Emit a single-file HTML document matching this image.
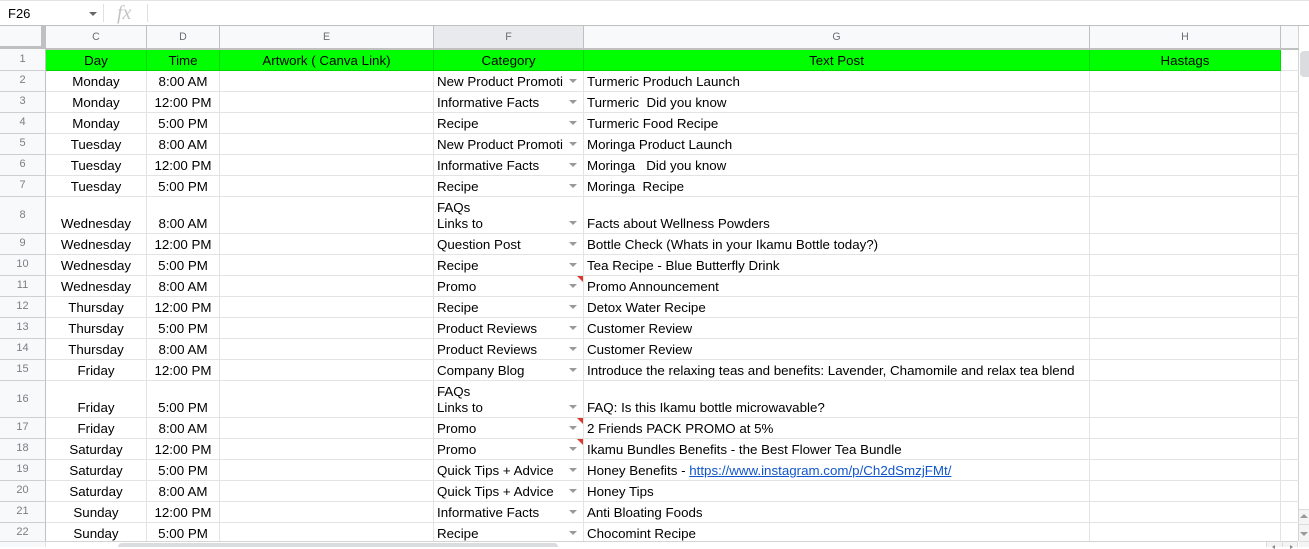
<!DOCTYPE html>
<html lang="en">
<head>
<meta charset="utf-8">
<title>Sheet</title>
<style>
*{box-sizing:border-box}
html,body{margin:0;padding:0;width:1309px;height:547px;overflow:hidden;background:#fff;font-family:"Liberation Sans",Arial,sans-serif;color:#000}
.abs{position:absolute}
#grid{position:absolute;left:0;top:49px;width:1299px;height:492px;overflow:hidden}
.r{display:flex;height:21px;border-bottom:1px solid #e2e3e3}
.r.t{height:37px}
.r>div{position:relative;flex:none;height:100%;border-right:1px solid #e2e3e3;font-size:13.33px;line-height:16px;white-space:nowrap;overflow:hidden}
.r>div:nth-child(1){width:46px;background:#f8f9fa;border-right:1px solid #c0c0c0;color:#7b7d80;font-size:11px;text-align:center}
.r>div:nth-child(2){width:101px;text-align:center}
.r>div:nth-child(3){width:73px;text-align:center}
.r>div:nth-child(4){width:214px;text-align:center}
.r>div:nth-child(5){width:150px}
.r>div:nth-child(6){width:506px}
.r>div:nth-child(7){width:191px;text-align:center}
.r>div:nth-child(8){width:18px;border-right:1px solid #d4d4d4}
.r>div>span{position:absolute;left:0;right:0;bottom:1px;padding:0 3px}
.r>div:nth-child(1)>span{bottom:3px;padding:0}
.r.h{height:22px;border-bottom:1px solid #00d800}
.r.h>div{background:#0f0;border-right-color:#00d800}
.r.h>div:nth-child(1){background:#f8f9fa;border-right-color:#c0c0c0;border-bottom:1px solid #cfcfcf;height:22px}
.r.h>div:nth-child(8){background:#fff;border-right-color:#d4d4d4;border-bottom:1px solid #e2e3e3;height:22px}
.r>div:nth-child(1){border-bottom:1px solid #cfcfcf;height:calc(100% + 1px)}
.dd::after{content:"";position:absolute;right:6px;bottom:8px;border-left:4px solid transparent;border-right:4px solid transparent;border-top:4px solid #999}
.n::before{content:"";position:absolute;right:0;top:0;border-top:6px solid #db3a2e;border-left:6px solid transparent;z-index:1}
.r>div:nth-child(5)>span{right:20px;overflow:hidden;padding-right:0;white-space:pre}
.r.h>div:nth-child(5)>span{right:0;padding:0}
a{color:#1155cc;text-decoration:underline}
.ch{position:absolute;top:26px;height:23px;background:#f8f9fa;border-right:1px solid #c0c0c0;color:#6b6e72;font-size:10.6px;line-height:23px;text-align:center}
</style>
</head>
<body>
<!-- formula bar -->
<div class="abs" style="left:0;top:0;width:1309px;height:26px;background:#fff;border-top:1px solid #e3e3e3;border-bottom:1px solid #c0c0c0"></div>
<div class="abs" style="left:8px;top:6px;font-size:13px;line-height:16px;color:#000">F26</div>
<div class="abs" style="left:89px;top:12px;border-left:4px solid transparent;border-right:4px solid transparent;border-top:4px solid #666"></div>
<div class="abs" style="left:103px;top:4px;width:1px;height:18px;background:#e0e0e0"></div>
<div class="abs" style="left:117px;top:1px;font-family:'Liberation Serif',serif;font-style:italic;font-size:20px;line-height:24px;color:#c4c4c4">fx</div>
<div class="abs" style="left:147px;top:4px;width:1px;height:18px;background:#e0e0e0"></div>

<!-- column headers -->
<div class="abs" style="left:0;top:26px;width:46px;height:23px;background:#f8f9fa;border-right:1px solid #c0c0c0"></div>
<div class="abs" style="left:41px;top:26px;width:4px;height:23px;background:#c0c0c0"></div>
<div class="abs" style="left:0;top:46px;width:45px;height:3px;background:#c0c0c0"></div>
<div class="ch" style="left:46px;width:101px">C</div>
<div class="ch" style="left:147px;width:73px">D</div>
<div class="ch" style="left:220px;width:214px">E</div>
<div class="ch" style="left:434px;width:150px;background:#e8eaed">F</div>
<div class="ch" style="left:584px;width:506px">G</div>
<div class="ch" style="left:1090px;width:191px">H</div>
<div class="ch" style="left:1281px;width:18px;border-right:1px solid #d4d4d4"></div>

<div id="grid">
<div class="r h"><div><span>1</span></div><div><span>Day</span></div><div><span>Time</span></div><div><span>Artwork ( Canva Link)</span></div><div style="text-align:center"><span>Category</span></div><div style="text-align:center"><span>Text Post</span></div><div><span>Hastags</span></div><div></div></div>
<div class="r"><div><span>2</span></div><div><span>Monday</span></div><div><span>8:00 AM</span></div><div></div><div class="dd"><span>New Product Promotion</span></div><div><span>Turmeric Produch Launch</span></div><div></div><div></div></div>
<div class="r"><div><span>3</span></div><div><span>Monday</span></div><div><span>12:00 PM</span></div><div></div><div class="dd"><span>Informative Facts</span></div><div><span>Turmeric&nbsp; Did you know</span></div><div></div><div></div></div>
<div class="r"><div><span>4</span></div><div><span>Monday</span></div><div><span>5:00 PM</span></div><div></div><div class="dd"><span>Recipe</span></div><div><span>Turmeric Food Recipe</span></div><div></div><div></div></div>
<div class="r"><div><span>5</span></div><div><span>Tuesday</span></div><div><span>8:00 AM</span></div><div></div><div class="dd"><span>New Product Promotion</span></div><div><span>Moringa Product Launch</span></div><div></div><div></div></div>
<div class="r"><div><span>6</span></div><div><span>Tuesday</span></div><div><span>12:00 PM</span></div><div></div><div class="dd"><span>Informative Facts</span></div><div><span>Moringa &nbsp; Did you know</span></div><div></div><div></div></div>
<div class="r"><div><span>7</span></div><div><span>Tuesday</span></div><div><span>5:00 PM</span></div><div></div><div class="dd"><span>Recipe</span></div><div><span>Moringa&nbsp; Recipe</span></div><div></div><div></div></div>
<div class="r t"><div><span style="bottom:10px">8</span></div><div><span>Wednesday</span></div><div><span>8:00 AM</span></div><div></div><div class="dd"><span>FAQs
Links to</span></div><div><span>Facts about Wellness Powders</span></div><div></div><div></div></div>
<div class="r"><div><span>9</span></div><div><span>Wednesday</span></div><div><span>12:00 PM</span></div><div></div><div class="dd"><span>Question Post</span></div><div><span>Bottle Check (Whats in your Ikamu Bottle today?)</span></div><div></div><div></div></div>
<div class="r"><div><span>10</span></div><div><span>Wednesday</span></div><div><span>5:00 PM</span></div><div></div><div class="dd"><span>Recipe</span></div><div><span>Tea Recipe - Blue Butterfly Drink</span></div><div></div><div></div></div>
<div class="r"><div><span>11</span></div><div><span>Wednesday</span></div><div><span>8:00 AM</span></div><div></div><div class="dd n"><span>Promo</span></div><div><span>Promo Announcement</span></div><div></div><div></div></div>
<div class="r"><div><span>12</span></div><div><span>Thursday</span></div><div><span>12:00 PM</span></div><div></div><div class="dd"><span>Recipe</span></div><div><span>Detox Water Recipe</span></div><div></div><div></div></div>
<div class="r"><div><span>13</span></div><div><span>Thursday</span></div><div><span>5:00 PM</span></div><div></div><div class="dd"><span>Product Reviews</span></div><div><span>Customer Review</span></div><div></div><div></div></div>
<div class="r"><div><span>14</span></div><div><span>Thursday</span></div><div><span>8:00 AM</span></div><div></div><div class="dd"><span>Product Reviews</span></div><div><span>Customer Review</span></div><div></div><div></div></div>
<div class="r"><div><span>15</span></div><div><span>Friday</span></div><div><span>12:00 PM</span></div><div></div><div class="dd"><span>Company Blog</span></div><div><span>Introduce the relaxing teas and benefits: Lavender, Chamomile and relax tea blend</span></div><div></div><div></div></div>
<div class="r t"><div><span style="bottom:10px">16</span></div><div><span>Friday</span></div><div><span>5:00 PM</span></div><div></div><div class="dd"><span>FAQs
Links to</span></div><div><span>FAQ: Is this Ikamu bottle microwavable?</span></div><div></div><div></div></div>
<div class="r"><div><span>17</span></div><div><span>Friday</span></div><div><span>8:00 AM</span></div><div></div><div class="dd n"><span>Promo</span></div><div><span>2 Friends PACK PROMO at 5%</span></div><div></div><div></div></div>
<div class="r"><div><span>18</span></div><div><span>Saturday</span></div><div><span>12:00 PM</span></div><div></div><div class="dd n"><span>Promo</span></div><div><span>Ikamu Bundles Benefits - the Best Flower Tea Bundle</span></div><div></div><div></div></div>
<div class="r"><div><span>19</span></div><div><span>Saturday</span></div><div><span>5:00 PM</span></div><div></div><div class="dd"><span>Quick Tips + Advice</span></div><div><span>Honey Benefits - <a>https://www.instagram.com/p/Ch2dSmzjFMt/</a></span></div><div></div><div></div></div>
<div class="r"><div><span>20</span></div><div><span>Saturday</span></div><div><span>8:00 AM</span></div><div></div><div class="dd"><span>Quick Tips + Advice</span></div><div><span>Honey Tips</span></div><div></div><div></div></div>
<div class="r"><div><span>21</span></div><div><span>Sunday</span></div><div><span>12:00 PM</span></div><div></div><div class="dd"><span>Informative Facts</span></div><div><span>Anti Bloating Foods</span></div><div></div><div></div></div>
<div class="r"><div><span>22</span></div><div><span>Sunday</span></div><div><span>5:00 PM</span></div><div></div><div class="dd"><span>Recipe</span></div><div><span>Chocomint Recipe</span></div><div></div><div></div></div>
</div>

<!-- freeze line under column headers -->
<div class="abs" style="left:46px;top:48px;width:1253px;height:2px;background:#c0c0c0"></div>

<!-- bottom edge and horizontal scrollbar -->
<div class="abs" style="left:0;top:541px;width:1298px;height:1px;background:#d4d4d4"></div>
<div class="abs" style="left:0;top:542px;width:46px;height:5px;background:#f8f9fa;border-right:1px solid #e0e0e0"></div>
<div class="abs" style="left:118px;top:543px;width:440px;height:4px;background:#dadce0;border-radius:4px 4px 0 0"></div>
<div class="abs" style="left:1266px;top:542px;width:16px;height:5px;background:#f4f4f4;border-left:1px solid #ddd"></div>
<div class="abs" style="left:1282px;top:542px;width:16px;height:5px;background:#f4f4f4;border-left:1px solid #ddd;border-right:1px solid #ddd"></div>
<div class="abs" style="left:1272px;top:545px;width:0;height:0;border-top:2px solid transparent;border-bottom:2px solid transparent;border-right:3px solid #888"></div>
<div class="abs" style="left:1290px;top:545px;width:0;height:0;border-top:2px solid transparent;border-bottom:2px solid transparent;border-left:3px solid #888"></div>

<!-- vertical scrollbar -->
<div class="abs" style="left:1300px;top:51px;width:9px;height:26px;background:#dadce0;border-radius:4px 0 0 4px"></div>
<div class="abs" style="left:1299px;top:509px;width:10px;height:16px;background:#f4f4f4;border-top:1px solid #ddd;border-bottom:1px solid #ddd"></div>
<div class="abs" style="left:1299px;top:525px;width:10px;height:16px;background:#f4f4f4"></div>
<div class="abs" style="left:1299px;top:541px;width:10px;height:6px;background:#f4f4f4;border-top:1px solid #ddd"></div>
<div class="abs" style="left:1300px;top:514px;border-left:4px solid transparent;border-right:4px solid transparent;border-bottom:4px solid #999"></div>
<div class="abs" style="left:1300px;top:532px;border-left:4px solid transparent;border-right:4px solid transparent;border-top:4px solid #999"></div>
</body>
</html>
